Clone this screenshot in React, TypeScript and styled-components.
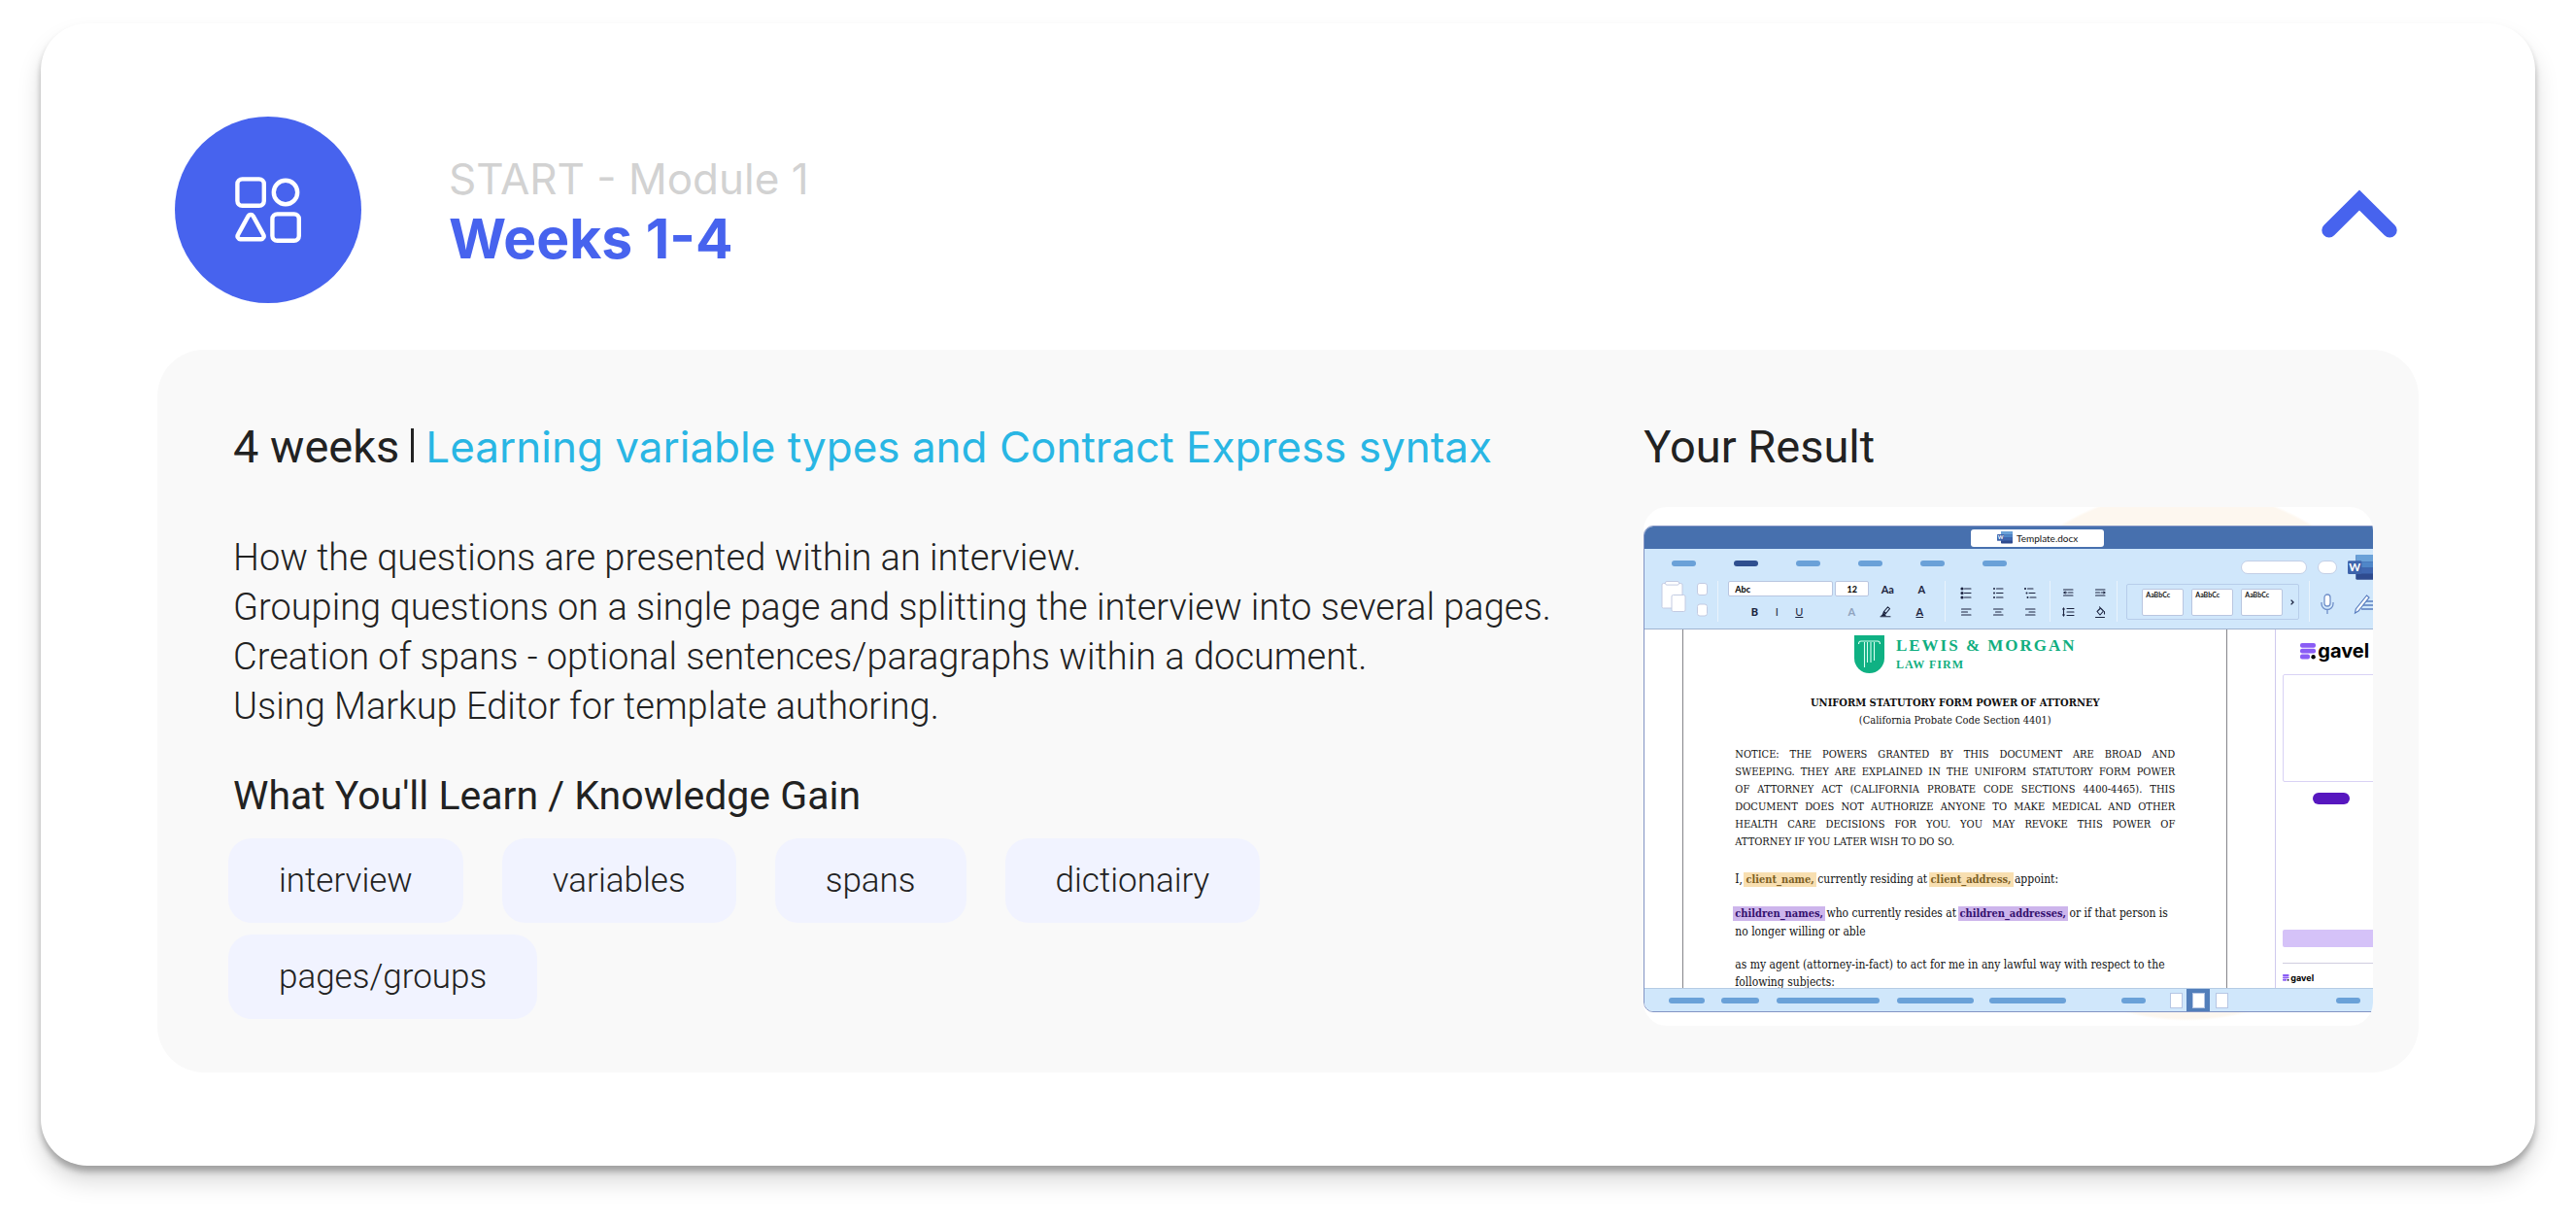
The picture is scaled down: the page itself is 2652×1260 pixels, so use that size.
import React, { useState } from "react";
import styled, { createGlobalStyle } from "styled-components";

const blue = "#4763ee";
const ink = "#1c2440";

const GlobalStyle = createGlobalStyle`
  * { box-sizing: border-box; }
  body {
    margin: 0;
    background: #fff;
    color: #222;
    font-family: Roboto, "Liberation Sans", sans-serif;
  }
  h2, h3, p, ul { margin: 0; padding: 0; }
  button, input { font: inherit; color: inherit; }
`;

/* ---------- module card ---------- */

const Page = styled.main`
  padding: 24px 42px 60px;
`;

const Card = styled.section`
  padding: 96px 120px;
  border-radius: 48px;
  background: #fff;
  box-shadow: 0 6px 6px rgba(0, 0, 0, 0.27), 0 16px 24px rgba(0, 0, 0, 0.15);
`;

const Header = styled.header`
  display: flex;
  align-items: center;
  gap: 90px;
  padding: 0 18px;
  margin-bottom: 48px;
`;

const Badge = styled.div`
  display: grid;
  place-items: center;
  width: 192px;
  height: 192px;
  border-radius: 50%;
  background: ${blue};
`;

const Titles = styled.div`
  flex: 1;
  font-family: Inter, "Liberation Sans", sans-serif;
`;

const Eyebrow = styled.p`
  font-size: 44px;
  line-height: 60px;
  font-weight: 400;
  color: #d2d2d2;
`;

const Weeks = styled.h2`
  font-size: 57px;
  line-height: 64px;
  font-weight: 700;
  color: ${blue};
`;

const Toggle = styled.button`
  display: flex;
  padding: 8px 4px 0;
  border: 0;
  background: none;
  cursor: pointer;
`;

const Panel = styled.div`
  display: grid;
  grid-template-columns: minmax(0, 1fr) 34%;
  column-gap: 60px;
  padding: 70px 47px 48px 73px;
  border-radius: 48px;
  background: #f9f9f9;
`;

const Summary = styled.div`
  padding-bottom: 6px;
`;

const Heading = styled.h3<{ $flush?: boolean }>`
  padding-left: ${(p) => (p.$flush ? 0 : 5)}px;
  font-size: 47px;
  line-height: 60px;
  font-weight: 400;
  white-space: nowrap;
`;

const Bar = styled.span`
  display: inline-block;
  width: 3px;
  height: 35px;
  margin: 0 12px;
  background: #222;
`;

const Topic = styled.span`
  font-family: Inter, "Liberation Sans", sans-serif;
  font-size: 44px;
  font-weight: 400;
  color: #29b6e4;
`;

const Text = styled.p`
  padding: 59px 0 41px 5px;
  font-size: 38px;
  line-height: 51px;
  font-weight: 300;
  color: #222;
`;

const Subheading = styled.h3`
  padding-left: 5px;
  font-size: 41px;
  line-height: 51px;
  font-weight: 400;
`;

const Tags = styled.ul`
  display: flex;
  flex-wrap: wrap;
  gap: 12px 40px;
  margin-top: 18px;
  list-style: none;
`;

const Tag = styled.li`
  padding: 18px 52px;
  border-radius: 24px;
  background: #f1f3ff;
  font-size: 35px;
  line-height: 51px;
  font-weight: 300;
  color: #222;
`;

/* ---------- editor preview ---------- */

const Preview = styled.div`
  height: 534px;
  margin-top: 32px;
  padding-top: 19px;
  overflow: hidden;
  border-radius: 24px;
  background: radial-gradient(ellipse 259px 274px at 559px 255px, #fdf7ef 99%, #fff 100%);
`;

const Window = styled.div`
  display: flex;
  flex-direction: column;
  width: calc(100% + 60px);
  height: 501px;
  overflow: hidden;
  border: 1px solid #8294c4;
  border-radius: 10px;
  background: #fff;
  color: #111;
`;

const TitleBar = styled.div`
  display: flex;
  justify-content: center;
  align-items: center;
  flex: 0 0 23px;
  background: #4770ae;
`;

const FileName = styled.div`
  display: flex;
  justify-content: center;
  align-items: center;
  gap: 4px;
  width: 137px;
  height: 18px;
  border-radius: 3px;
  background: #fff;
  font-family: Lato, sans-serif;
  font-size: 10px;
`;

const Ribbon = styled.div`
  flex: 0 0 83px;
  border-bottom: 1px solid #9fb3cf;
  background: #d0e7fb;
`;

const TabRow = styled.div`
  display: flex;
  align-items: center;
  gap: 39px;
  height: 30px;
  padding: 0 52px 0 28px;
`;

const Pill = styled.span<{ $w: number; $h?: number; $tone?: string; $ml?: number }>`
  flex: none;
  width: ${(p) => p.$w}px;
  height: ${(p) => p.$h ?? 6}px;
  margin-left: ${(p) => p.$ml ?? 0}px;
  border-radius: 8px;
  background: ${(p) => p.$tone ?? "#6aa1d8"};
`;

const Account = styled.div`
  display: flex;
  align-items: center;
  gap: 11px;
  margin: 8px 0 0 auto;
`;

const Field = styled.span<{ $w: number }>`
  width: ${(p) => p.$w}px;
  height: 14px;
  border: 1px solid #c3cfe6;
  border-radius: 7px;
  background: #fff;
`;

const Tools = styled.div`
  display: flex;
  height: 52px;
  padding: 3px 0 7px 17px;
`;

const Paste = styled.div`
  display: flex;
  gap: 11px;
`;

const Group = styled.div<{ $w: number }>`
  flex: none;
  display: flex;
  flex-direction: column;
  gap: 6px;
  width: ${(p) => p.$w}px;
`;

const Rule = styled.span<{ $m?: number }>`
  flex: none;
  width: 1px;
  margin: 0 ${(p) => p.$m ?? 10}px;
  background: #e9f3fc;
`;

const ToolRow = styled.div<{ $gap: number; $pl?: number; $h?: number }>`
  display: flex;
  align-items: center;
  gap: ${(p) => p.$gap}px;
  height: ${(p) => p.$h ?? 16}px;
  padding-left: ${(p) => p.$pl ?? 0}px;
`;

const FontInput = styled.input<{ $w: number; $center?: boolean }>`
  width: ${(p) => p.$w}px;
  height: 16px;
  padding: 0 6px;
  border: 1px solid #b9c6e0;
  border-radius: 2px;
  background: #fff;
  font-family: Lato, sans-serif;
  font-size: 9px;
  font-weight: 900;
  text-align: ${(p) => (p.$center ? "center" : "left")};
`;

const Tool = styled.button<{ $weight?: number; $tone?: string; $line?: boolean }>`
  display: flex;
  flex: none;
  justify-content: center;
  align-items: center;
  width: 16px;
  height: 14px;
  padding: 0;
  border: 0;
  background: none;
  color: ${(p) => p.$tone ?? ink};
  font-family: Lato, sans-serif;
  font-size: 11px;
  font-weight: ${(p) => p.$weight ?? 700};
  text-decoration: ${(p) => (p.$line ? "underline" : "none")};
`;

const IconGrid = styled.div<{ $cols: number }>`
  display: grid;
  grid-template-columns: repeat(${(p) => p.$cols}, 16px);
  justify-content: center;
  gap: 6px 17px;
  padding-top: 5px;
`;

const Styles = styled.div`
  flex: none;
  display: flex;
  align-items: center;
  gap: 8px;
  width: 178px;
  height: 37px;
  margin-top: 3px;
  padding-left: 15px;
  border: 1px solid #b7cdea;
  border-radius: 2px;
`;

const StyleCell = styled.div`
  width: 43px;
  height: 28px;
  padding: 1px 3px;
  border: 1px solid #b9c6e0;
  border-radius: 2px;
  background: #fff;
  font-family: Lato, sans-serif;
  font-size: 7px;
  font-weight: 700;
`;

const Workspace = styled.div`
  display: flex;
  flex: 1;
  min-height: 0;
  overflow: hidden;
  padding-left: 39px;
`;

const Sheet = styled.article`
  flex: 0 0 561px;
  padding: 6px 53px 0;
  border: solid #85858a;
  border-width: 0 1px;
  font-family: "DejaVu Serif Condensed", "DejaVu Serif", serif;
  font-stretch: condensed;
  font-size: 12px;
  line-height: 18px;
`;

const Letterhead = styled.div`
  display: flex;
  justify-content: center;
  gap: 12px;
  padding-left: 21px;
  margin-bottom: 22px;
  color: #10ae80;
  font-family: "Liberation Serif", serif;
  font-weight: 700;
`;

const Firm = styled.div`
  font-size: 17px;
  line-height: 21px;
  letter-spacing: 2px;
`;

const FirmKind = styled.div`
  font-size: 12px;
  line-height: 18px;
  letter-spacing: 1px;
`;

const DocTitle = styled.div`
  margin-bottom: 17px;
  text-align: center;
  font-size: 11px;
`;

const Notice = styled.div`
  margin-bottom: 20px;
  font-size: 11px;
`;

const Line = styled.div<{ $natural?: boolean }>`
  white-space: nowrap;
  text-align: justify;
  text-align-last: ${(p) => (p.$natural ? "left" : "justify")};
`;

const Clause = styled.p`
  margin-bottom: 16px;
  white-space: nowrap;
`;

const Mark = styled.mark<{ $violet?: boolean }>`
  margin: 0 -2px;
  padding: 1px 2px;
  background: ${(p) => (p.$violet ? "#cdb5ec" : "#f8dfb1")};
  color: ${(p) => (p.$violet ? "#34106e" : "#7d5f26")};
  font-size: 11px;
  font-weight: 700;
`;

const Side = styled.aside`
  display: flex;
  flex: 1;
  flex-direction: column;
  margin-left: 49px;
  padding-left: 7px;
  border-left: 1px solid #cfc9ee;
`;

const Brand = styled.div<{ $small?: boolean }>`
  display: flex;
  align-items: center;
  gap: 1px;
  height: ${(p) => (p.$small ? 12 : 24)}px;
  margin: ${(p) => (p.$small ? "8px 0 0" : "10px 0 12px 18px")};
  color: #000;
  font-family: Inter, sans-serif;
  font-size: ${(p) => (p.$small ? 9 : 20)}px;
  font-weight: 700;
`;

const SideBox = styled.div`
  height: 111px;
  margin-bottom: 11px;
  border: 1px solid #d9d2f5;
  border-radius: 2px;
`;

const SideField = styled.div`
  height: 18px;
  margin: 129px 0 16px;
  border-radius: 2px;
  background: #d5c2f8;
`;

const SideRule = styled.div`
  height: 1px;
  background: #d0cde0;
`;

const StatusBar = styled.div`
  display: flex;
  flex: 0 0 24px;
  align-items: center;
  padding-left: 25px;
  border-top: 1px solid #b5cbe4;
  background: #d0e7fb;
`;

const View = styled.span<{ $active?: boolean; $ml?: number }>`
  display: grid;
  place-items: center;
  width: ${(p) => (p.$active ? 24 : 11)}px;
  height: 23px;
  margin-left: ${(p) => p.$ml ?? 6}px;
  background: ${(p) => (p.$active ? "#527eba" : "transparent")};

  &::after {
    content: "";
    width: 11px;
    height: 14px;
    border: 1px solid #b6c6e4;
    background: #fff;
  }
`;

/* ---------- drawings ---------- */

const ShapesIcon = () => (
  <svg width="72" height="72" viewBox="0 0 72 72" fill="none" stroke="#fff" strokeWidth="4.4" strokeLinejoin="round" aria-hidden="true">
    <rect x="4.4" y="4.4" width="27.4" height="27.4" rx="5" />
    <circle cx="54" cy="18" r="12.2" />
    <path d="M15.6 42.4a3 3 0 0 1 5 0L31.2 61.6a3 3 0 0 1-2.4 4.6H7.4a3 3 0 0 1-2.4-4.6Z" />
    <rect x="40.4" y="40.4" width="27.4" height="27.4" rx="5" />
  </svg>
);

const Chevron = ({ open }: { open: boolean }) => (
  <svg width="78" height="50" viewBox="0 0 78 50" fill="none" aria-hidden="true" transform={open ? undefined : "rotate(180)"}>
    <path d="M7.8 42 39 11l31.2 31" stroke={blue} strokeWidth="15" strokeLinecap="round" />
  </svg>
);

const WordLogo = ({ size }: { size: number }) => (
  <svg width={size} height={size * 0.78} viewBox="0 0 32 25" aria-hidden="true">
    <rect x="8" width="24" height="25" rx="1.5" fill="#2f4b8f" />
    <path d="M8 0h24v7H8z" fill="#6aa1d8" />
    <path d="M8 7h24v6H8z" fill="#4f86c8" />
    <path d="M8 13h24v6H8z" fill="#3f66b0" />
    <rect y="6" width="14" height="13.5" rx="1.2" fill="#3e63ab" />
    <text x="7" y="16.6" textAnchor="middle" fontFamily="Lato, sans-serif" fontSize="11" fontWeight="700" fill="#fff">W</text>
  </svg>
);

const Clipboard = () => (
  <svg width="26" height="33" viewBox="0 0 26 33" fill="#fff" stroke="#c3cbe2" aria-hidden="true">
    <rect x="1" y="2.5" width="21" height="25.5" rx="1.5" />
    <rect x="4.5" y=".5" width="14" height="3.6" rx="1.5" />
    <rect x="11" y="14.5" width="14" height="17" rx="1.5" />
  </svg>
);

const PasteOptions = () => (
  <svg width="11" height="37" viewBox="0 0 11 37" fill="#fff" stroke="#c3cbe2" aria-hidden="true">
    <rect x=".5" y="2.5" width="10" height="12" rx="2.5" />
    <rect x=".5" y="24" width="10" height="12" rx="2.5" />
  </svg>
);

const Glyph = ({ d, fill }: { d: string; fill?: string }) => (
  <svg width="14" height="14" viewBox="0 0 14 14" aria-hidden="true">
    <path d={d} fill="none" stroke={ink} strokeWidth="1.1" strokeLinecap="round" strokeLinejoin="round" />
    {fill && <path d={fill} fill={ink} />}
  </svg>
);

const dot = (x: number, y: number, r: number) => `M${x - r} ${y}a${r} ${r} 0 1 0 ${2 * r} 0a${r} ${r} 0 1 0 ${-2 * r} 0z`;

const listIcons = [
  { name: "Bullets", d: "M5.5 3h6.5M5.5 7.5h6.5M5.5 12h6.5", fill: dot(3, 3, 1.6) + dot(3, 7.5, 1.6) + dot(3, 12, 1.6) },
  { name: "Numbering", d: "M5.5 3h6.5M5.5 7.5h6.5M5.5 12h6.5", fill: dot(3, 3, 1) + dot(3, 7.5, 1) + dot(3, 12, 1) },
  { name: "Multilevel list", d: "M4.5 3h5.5M6 7.5h6M7 12h6", fill: dot(2, 3, 1.1) + dot(3.5, 7.5, 1) + dot(4.5, 12, 1) },
  { name: "Align left", d: "M2.5 4h9.5M2.5 7h6M2.5 10h9.5" },
  { name: "Align centre", d: "M2.5 4h9.5M4.5 7h5.5M2.5 10h9.5" },
  { name: "Align right", d: "M2.5 4h9.5M6 7h6M2.5 10h9.5" },
];

const indentIcons = [
  { name: "Decrease indent", d: "M2.5 4h9.5M7.5 7h4.5M2.5 10h9.5M3 7h3", fill: "M2 7l2.5-1.8v3.6z" },
  { name: "Increase indent", d: "M2.5 4h9.5M2.5 7h4M2.5 10h9.5M8 7h3", fill: "M13 7l-2.5-1.8v3.6z" },
  { name: "Line spacing", d: "M6 3.5h7M6 7h7M6 10.5h7M2.5 4v6", fill: "M2.5 2l1.6 2.6H.9zM2.5 12L.9 9.4h3.2z" },
  { name: "Shading", d: "M2.5 12.5h9M4 6.5l3.5-3.5 3 3-3.5 4zM7.5 3l-1-1.2M11.5 6.5v2.500" },
];

const Highlighter = () => <Glyph d="M2 12.8h10M4.5 10.5l1-3L9.5 2.8l2 1.8-4 4.9zM5.5 7.5l2 2" fill="M2 12.2l3-3 2.5 1.5v1.5z" />;

const Mic = () => (
  <svg width="16" height="22" viewBox="0 0 16 22" fill="none" stroke="#6f8fc8" strokeWidth="1.3" aria-hidden="true">
    <rect x="5" y="1" width="6" height="12" rx="3" fill="#fff" />
    <path d="M2 9v1.5a6 6 0 0 0 12 0V9M8 16.5V21" />
  </svg>
);

const Pen = () => (
  <svg width="24" height="22" viewBox="0 0 24 22" fill="none" stroke="#5a7fc0" strokeWidth="1.2" aria-hidden="true">
    <path d="M12 8h12M10 12h14M8 16h14" strokeWidth="1.6" />
    <path d="M13.5 2 16 4 5 18l-3.5 2 .8-4z" fill="#fff" />
  </svg>
);

const Shield = () => (
  <svg width="31" height="39" viewBox="0 0 31 39" aria-hidden="true">
    <path d="M0 0h31v23.5a15.5 15.5 0 0 1-31 0z" fill="#0fb183" />
    <path d="M4.5 9c0-2 1-3 2.5-3h17c1.500 0 2.500 1 2.500 3M10.500 7v26M13.500 7v21M17 7v21M20.500 7v19" fill="none" stroke="#d9fff2" strokeWidth="1.1" />
  </svg>
);

const GavelMark = ({ size }: { size: number }) => (
  <svg width={size} height={size} viewBox="0 0 17 17" aria-hidden="true">
    <g fill="#8a5cf5">
      <rect x="0" y="0" width="16" height="4.8" rx="2" />
      <rect x="0" y="5.8" width="16" height="4.8" rx="2" />
      <rect x="0" y="11.6" width="10" height="4.8" rx="2" />
    </g>
    <circle cx="13.6" cy="14.2" r="2.2" fill="#000" />
  </svg>
);

/* ---------- content ---------- */

const tags = ["interview", "variables", "spans", "dictionairy", "pages/groups"];
const tabTones = ["#6aa1d8", "#2f4f8f", "#6aa1d8", "#6aa1d8", "#6aa1d8", "#6aa1d8"];
const noticeLines = [
  "NOTICE: THE POWERS GRANTED BY THIS DOCUMENT ARE BROAD AND",
  "SWEEPING. THEY ARE EXPLAINED IN THE UNIFORM STATUTORY FORM POWER",
  "OF ATTORNEY ACT (CALIFORNIA PROBATE CODE SECTIONS 4400-4465). THIS",
  "DOCUMENT DOES NOT AUTHORIZE ANYONE TO MAKE MEDICAL AND OTHER",
  "HEALTH CARE DECISIONS FOR YOU. YOU MAY REVOKE THIS POWER OF",
  "ATTORNEY IF YOU LATER WISH TO DO SO.",
];

const EditorPreview = () => (
  <Preview>
    <Window>
      <TitleBar>
        <FileName>
          <WordLogo size={16} />
          Template.docx
        </FileName>
      </TitleBar>
      <Ribbon>
        <TabRow>
          {tabTones.map((tone, i) => (
            <Pill key={i} $w={25} $tone={tone} />
          ))}
          <Account>
            <Field $w={68} />
            <Field $w={20} />
            <WordLogo size={33} />
          </Account>
        </TabRow>
        <Tools>
          <Paste>
            <Clipboard />
            <PasteOptions />
          </Paste>
          <Rule />
          <Group $w={213}>
            <ToolRow $gap={2}>
              <FontInput $w={108} aria-label="Font" defaultValue="Abc" />
              <FontInput $w={35} $center aria-label="Font size" defaultValue="12" />
              <ToolRow $gap={19} $pl={9}>
                <Tool type="button">Aa</Tool>
                <Tool type="button">A</Tool>
              </ToolRow>
            </ToolRow>
            <ToolRow $gap={7} $pl={19} $h={18}>
              <Tool type="button" $weight={900}>B</Tool>
              <Tool type="button" $weight={400}>I</Tool>
              <Tool type="button" $weight={400} $line>U</Tool>
              <ToolRow $gap={19} $pl={31}>
                <Tool type="button" $tone="#8fa3be">A</Tool>
                <Tool type="button" aria-label="Highlight"><Highlighter /></Tool>
                <Tool type="button" $line>A</Tool>
              </ToolRow>
            </ToolRow>
          </Group>
          <Rule />
          <Group $w={87}>
            <IconGrid $cols={3}>
              {listIcons.map(({ name, d, fill }) => (
                <Tool type="button" key={name} aria-label={name}><Glyph d={d} fill={fill} /></Tool>
              ))}
            </IconGrid>
          </Group>
          <Rule />
          <Group $w={49}>
            <IconGrid $cols={2}>
              {indentIcons.map(({ name, d, fill }) => (
                <Tool type="button" key={name} aria-label={name}><Glyph d={d} fill={fill} /></Tool>
              ))}
            </IconGrid>
          </Group>
          <Rule $m={9} />
          <Styles>
            <StyleCell>AaBbCc</StyleCell>
            <StyleCell>AaBbCc</StyleCell>
            <StyleCell>AaBbCc</StyleCell>
            <svg width="4" height="6" viewBox="0 0 4 6" fill="none" stroke={ink} strokeWidth="1.3" aria-hidden="true">
              <path d="M.6.6 3 3 .6 5.4" />
            </svg>
          </Styles>
          <Rule />
          <ToolRow $gap={19} $h={48}>
            <Mic />
            <Pen />
          </ToolRow>
        </Tools>
      </Ribbon>
      <Workspace>
        <Sheet>
          <Letterhead>
            <Shield />
            <div>
              <Firm>LEWIS &amp; MORGAN</Firm>
              <FirmKind>LAW FIRM</FirmKind>
            </div>
          </Letterhead>
          <DocTitle>
            <strong>UNIFORM STATUTORY FORM POWER OF ATTORNEY</strong>
            <br />
            (California Probate Code Section 4401)
          </DocTitle>
          <Notice>
            {noticeLines.map((line, i) => (
              <Line key={line} $natural={i === noticeLines.length - 1}>{line}</Line>
            ))}
          </Notice>
          <Clause>
            I, <Mark>client_name,</Mark> currently residing at <Mark>client_address,</Mark> appoint:
          </Clause>
          <Clause>
            <Mark $violet>children_names,</Mark> who currently resides at <Mark $violet>children_addresses,</Mark> or if that person is
            <br />
            no longer willing or able
          </Clause>
          <Clause>
            as my agent (attorney-in-fact) to act for me in any lawful way with respect to the
            <br />
            following subjects:
          </Clause>
        </Sheet>
        <Side>
          <Brand>
            <GavelMark size={17} />
            gavel
          </Brand>
          <SideBox />
          <Pill $w={38} $h={12} $ml={31} $tone="#5717bf" />
          <SideField />
          <SideRule />
          <Brand $small>
            <GavelMark size={7} />
            gavel
          </Brand>
        </Side>
      </Workspace>
      <StatusBar>
        <Pill $w={37} />
        <Pill $w={39} $ml={17} />
        <Pill $w={106} $ml={18} />
        <Pill $w={79} $ml={18} />
        <Pill $w={79} $ml={16} />
        <Pill $w={25} $ml={57} />
        <View $ml={25} />
        <View $active />
        <View />
        <Pill $w={25} $ml={113} />
      </StatusBar>
    </Window>
  </Preview>
);

export default function App() {
  const [open, setOpen] = useState(true);

  return (
    <>
      <GlobalStyle />
      <Page>
        <Card>
          <Header>
            <Badge>
              <ShapesIcon />
            </Badge>
            <Titles>
              <Eyebrow>START - Module 1</Eyebrow>
              <Weeks>Weeks 1-4</Weeks>
            </Titles>
            <Toggle type="button" aria-expanded={open} aria-label="Toggle module" onClick={() => setOpen(!open)}>
              <Chevron open={open} />
            </Toggle>
          </Header>
          {open && (
            <Panel>
              <Summary>
                <Heading>
                  4 weeks
                  <Bar />
                  <Topic>Learning variable types and Contract Express syntax</Topic>
                </Heading>
                <Text>
                  How the questions are presented within an interview.
                  <br />
                  Grouping questions on a single page and splitting the interview into several pages.
                  <br />
                  Creation of spans - optional sentences/paragraphs within a document.
                  <br />
                  Using Markup Editor for template authoring.
                </Text>
                <Subheading>What You'll Learn / Knowledge Gain</Subheading>
                <Tags>
                  {tags.map((tag) => (
                    <Tag key={tag}>{tag}</Tag>
                  ))}
                </Tags>
              </Summary>
              <div>
                <Heading $flush>Your Result</Heading>
                <EditorPreview />
              </div>
            </Panel>
          )}
        </Card>
      </Page>
    </>
  );
}
